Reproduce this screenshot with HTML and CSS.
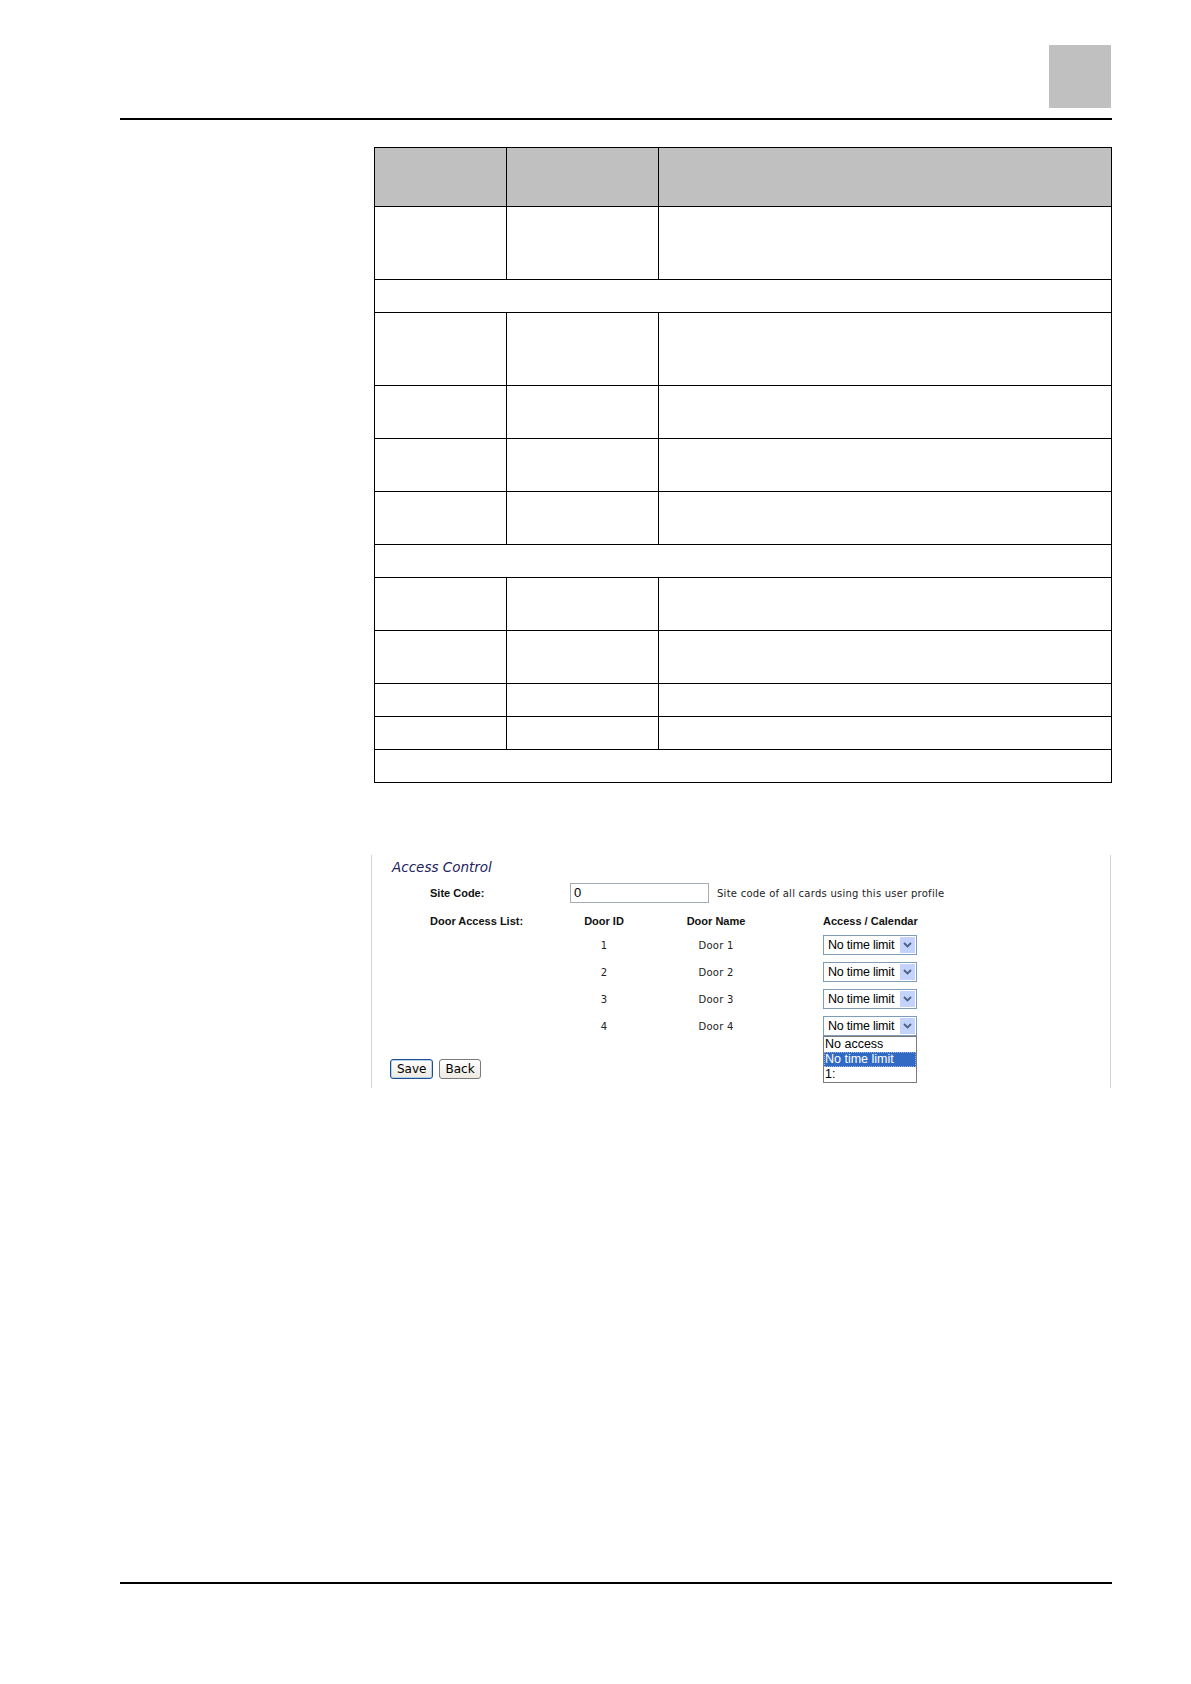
FILE: index.html
```
<!DOCTYPE html>
<html>
<head>
<meta charset="utf-8">
<link rel="stylesheet" href="styles.css">
</head>
<body>
<div class="page">
  <div class="top">
    <div class="tab"></div>
  </div>
  <div class="rule"></div>

  <table class="spec">
    <tr class="h59 head"><td class="c1"></td><td class="c2"></td><td class="c3"></td></tr>
    <tr class="h73"><td></td><td></td><td></td></tr>
    <tr class="h33"><td colspan="3"></td></tr>
    <tr class="h73"><td></td><td></td><td></td></tr>
    <tr class="h53"><td></td><td></td><td></td></tr>
    <tr class="h53"><td></td><td></td><td></td></tr>
    <tr class="h53"><td></td><td></td><td></td></tr>
    <tr class="h33"><td colspan="3"></td></tr>
    <tr class="h53"><td></td><td></td><td></td></tr>
    <tr class="h53"><td></td><td></td><td></td></tr>
    <tr class="h33"><td></td><td></td><td></td></tr>
    <tr class="h33"><td></td><td></td><td></td></tr>
    <tr class="h33"><td colspan="3"></td></tr>
  </table>

  <div class="shot">
    <div class="title">Access Control</div>
    <div class="site-row">
      <div class="lbl">Site Code:</div>
      <div class="input">0</div>
      <div class="hint">Site code of all cards using this user profile</div>
    </div>
    <div class="doors">
      <div class="lbl hd">Door Access List:</div>
      <div class="th hd ctr">Door ID</div>
      <div class="th hd ctr">Door Name</div>
      <div class="th hd acc">Access / Calendar</div>

      <div></div><div class="td ctr">1</div><div class="td ctr">Door 1</div>
      <div class="acc"><div class="sel"><span>No time limit</span><i class="arr"><svg width="9" height="6" viewBox="0 0 9 6"><path d="M1 1 L4.5 4.5 L8 1" fill="none" stroke="#4d6185" stroke-width="1.8"/></svg></i></div></div>

      <div></div><div class="td ctr">2</div><div class="td ctr">Door 2</div>
      <div class="acc"><div class="sel"><span>No time limit</span><i class="arr"><svg width="9" height="6" viewBox="0 0 9 6"><path d="M1 1 L4.5 4.5 L8 1" fill="none" stroke="#4d6185" stroke-width="1.8"/></svg></i></div></div>

      <div></div><div class="td ctr">3</div><div class="td ctr">Door 3</div>
      <div class="acc"><div class="sel"><span>No time limit</span><i class="arr"><svg width="9" height="6" viewBox="0 0 9 6"><path d="M1 1 L4.5 4.5 L8 1" fill="none" stroke="#4d6185" stroke-width="1.8"/></svg></i></div></div>

      <div></div><div class="td ctr">4</div><div class="td ctr">Door 4</div>
      <div class="acc"><div class="sel open"><span>No time limit</span><i class="arr"><svg width="9" height="6" viewBox="0 0 9 6"><path d="M1 1 L4.5 4.5 L8 1" fill="none" stroke="#4d6185" stroke-width="1.8"/></svg></i>
        <div class="list">
          <div class="opt">No access</div>
          <div class="opt on">No time limit</div>
          <div class="opt">1:</div>
        </div>
      </div></div>
    </div>
    <div class="btns">
      <div class="btn def">Save</div>
      <div class="btn">Back</div>
    </div>
  </div>

  <div class="foot"></div>
</div>
</body>
</html>
```
FILE: styles.css
```
html, body { margin: 0; padding: 0; background: #fff; }
.page { width: 1191px; min-height: 1684px; position: relative; font-family: "Liberation Sans", Arial, sans-serif; }

.top { padding: 45px 80px 0 120px; display: flex; justify-content: flex-end; }
.tab { width: 62px; height: 63px; background: #c0c0c0; }
.rule { margin: 10px 79px 0 120px; height: 2px; background: #000; }

.spec { margin: 27px 0 0 374px; width: 738px; border-collapse: collapse; table-layout: fixed; }
.spec td { border: 1px solid #000; padding: 0; }
.spec .c1 { width: 131px; }
.spec .c2 { width: 151px; }
.head td { background: #c0c0c0; }
.h59 td { height: 58px; }
.h73 td { height: 72px; }
.h53 td { height: 52px; }
.h33 td { height: 32px; }

.shot { margin: 72px 0 0 371px; width: 738px; height: 231px; border-left: 1px solid #d4d4d4; border-right: 1px solid #d4d4d4; box-sizing: content-box; padding-top: 2px; }
.title { margin-left: 20px; height: 20px; line-height: 20px; font-family: "DejaVu Sans", Verdana, sans-serif; font-style: italic; font-size: 13.5px; color: #22225e; }

.site-row { display: flex; align-items: center; margin: 6px 0 0 58px; height: 20px; }
.lbl { width: 140px; font-weight: bold; font-size: 11px; color: #111; }
.input { width: 134px; height: 18px; border: 1px solid #a5acb2; padding-left: 3px; font-size: 13px; line-height: 18px; color: #000; }
.hint { margin-left: 8px; font-family: "DejaVu Sans", Verdana, sans-serif; font-size: 10px; letter-spacing: 0.25px; color: #222; }

.doors { display: grid; grid-template-columns: 140px 68px 156px auto; grid-auto-rows: 20px; row-gap: 7px; margin: 5px 0 0 58px; align-items: center; }
.doors > .hd { align-self: end; line-height: 14px; }
.th { font-weight: bold; font-size: 11px; color: #111; }
.ctr { text-align: center; }
.td { font-family: "DejaVu Sans", Verdana, sans-serif; font-size: 10px; letter-spacing: 0.25px; color: #222; }
.acc { padding-left: 29px; }

.sel { position: relative; width: 92px; height: 18px; border: 1px solid #7f9db9; display: flex; align-items: center; justify-content: space-between; font-size: 12.5px; color: #000; background: #fff; }
.sel span { padding-left: 4px; letter-spacing: -0.2px; }
.arr { width: 15px; height: 16px; margin-right: 1px; background: #c3d3fb; display: flex; align-items: center; justify-content: center; }
.list { position: absolute; top: 19px; left: -1px; width: 92px; border: 1px solid #7a7a7a; background: #fff; z-index: 2; }
.opt { height: 15px; line-height: 15px; font-size: 12.5px; padding-left: 1px; color: #000; }
.opt.on { background: #316ac5; color: #fff; outline: 1px dotted #9fb8e8; outline-offset: -1px; }

.btns { display: flex; gap: 6px; margin: 23px 0 0 18px; }
.btn { height: 18px; padding: 0 5px; border: 1px solid #7a7a7a; border-radius: 3px; background: linear-gradient(#ffffff, #ece9e0); font-family: "DejaVu Sans", Verdana, sans-serif; font-size: 12px; line-height: 18px; color: #000; }
.btn.def { border-color: #1c4f8f; box-shadow: inset 0 0 0 1px #b7d0ee; padding: 0 6px; }

.foot { margin: 494px 79px 0 120px; height: 2px; background: #000; }
```
